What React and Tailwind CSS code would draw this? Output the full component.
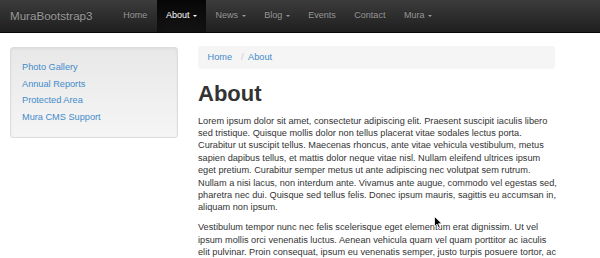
import React from "react";

const navItems = [
  { label: "Home" },
  { label: "About", caret: true, active: true },
  { label: "News", caret: true },
  { label: "Blog", caret: true },
  { label: "Events" },
  { label: "Contact" },
  { label: "Mura", caret: true },
];

const sideLinks = ["Photo Gallery", "Annual Reports", "Protected Area", "Mura CMS Support"];

const p1 = [
  "Lorem ipsum dolor sit amet, consectetur adipiscing elit. Praesent suscipit iaculis libero",
  "sed tristique. Quisque mollis dolor non tellus placerat vitae sodales lectus porta.",
  "Curabitur ut suscipit tellus. Maecenas rhoncus, ante vitae vehicula vestibulum, metus",
  "sapien dapibus tellus, et mattis dolor neque vitae nisl. Nullam eleifend ultrices ipsum",
  "eget pretium. Curabitur semper metus ut ante adipiscing nec volutpat sem rutrum.",
  "Nullam a nisi lacus, non interdum ante. Vivamus ante augue, commodo vel egestas sed,",
  "pharetra nec dui. Quisque sed tellus felis. Donec ipsum mauris, sagittis eu accumsan in,",
  "aliquam non ipsum.",
];

const p2 = [
  "Vestibulum tempor nunc nec felis scelerisque eget elementum erat dignissim. Ut vel",
  "ipsum mollis orci venenatis luctus. Aenean vehicula quam vel quam porttitor ac iaculis",
  "elit pulvinar. Proin consequat, ipsum eu venenatis semper, justo turpis posuere tortor, ac",
];

function Caret({ active }) {
  return (
    <span
      className={
        "ml-[3.5px] inline-block w-0 h-0 border-t-[2.5px] border-x-[2.5px] border-x-transparent align-middle " +
        (active ? "border-t-white" : "border-t-[#999]")
      }
    />
  );
}

export default function App() {
  return (
    <div className="relative w-[600px] h-[258px] overflow-hidden bg-white font-['Liberation_Sans',Arial,sans-serif]">
      {/* Navbar */}
      <div className="flex h-[33px] border-b border-[#080808] bg-gradient-to-b from-[#3c3c3c] to-[#1f1f1f]">
        <div className="w-[114px] pl-[10px] flex items-center text-[11.6px] text-[#9a9a9a] [text-shadow:0_-1px_0_rgba(0,0,0,0.25)]">
          MuraBootstrap3
        </div>
        <div className="flex">
          {navItems.map((n) => (
            <div
              key={n.label}
              className={
                "flex items-center px-[9.3px] text-[9px] whitespace-nowrap " +
                (n.active
                  ? "text-white bg-gradient-to-b from-[#080808] to-[#141414] shadow-[inset_0_3px_9px_rgba(0,0,0,0.25)]"
                  : "text-[#999] [text-shadow:0_-1px_0_rgba(0,0,0,0.25)]")
              }
            >
              {n.label}
              {n.caret && <Caret active={n.active} />}
            </div>
          ))}
        </div>
      </div>

      {/* Body */}
      <div className="flex mt-[13px] pl-[10px]">
        {/* Sidebar */}
        <div className="mt-px w-[168px] h-[91px] shrink-0 rounded-[3px] border border-[#dcdcdc] bg-gradient-to-b from-[#e8e8e8] to-[#f5f5f5] shadow-[inset_0_1px_3px_rgba(0,0,0,0.05)] pt-[11px] pl-[11px]">
          {sideLinks.map((l) => (
            <div key={l} className="text-[9.2px] leading-[16.7px] text-[#428bca]">
              {l}
            </div>
          ))}
        </div>

        {/* Main */}
        <div className="ml-[20px] w-[357px] shrink-0 text-[#333]">
          <div className="h-[23px] rounded-[3px] bg-[#f5f5f5] flex items-center pl-[9.5px] text-[9.2px] text-[#428bca]">
            <span>Home</span>
            <span className="ml-[9px] text-[#ccc]">/</span>
            <span className="ml-[4.5px]">About</span>
          </div>
          <h1 className="mt-[14px] text-[22px] leading-[22px] font-bold text-[#333]">About</h1>
          <p className="mt-[9.6px] text-[9.2px] leading-[12.4px] whitespace-nowrap">
            {p1.map((t, i) => (
              <React.Fragment key={i}>
                {t}
                {i < p1.length - 1 && <br />}
              </React.Fragment>
            ))}
          </p>
          <p className="mt-[7.6px] text-[9.2px] leading-[12.4px] whitespace-nowrap">
            {p2.map((t, i) => (
              <React.Fragment key={i}>
                {t}
                {i < p2.length - 1 && <br />}
              </React.Fragment>
            ))}
          </p>
        </div>
      </div>

      {/* Mouse cursor */}
      <svg className="absolute left-[434px] top-[216px]" width="9" height="13" viewBox="0 0 9 13">
        <path d="M0.5 0.5 L0.5 10.5 L3 8.2 L4.8 12.2 L6.3 11.5 L4.6 7.7 L8 7.7 Z" fill="#000" stroke="#fff" strokeWidth="0.8" />
      </svg>
    </div>
  );
}
